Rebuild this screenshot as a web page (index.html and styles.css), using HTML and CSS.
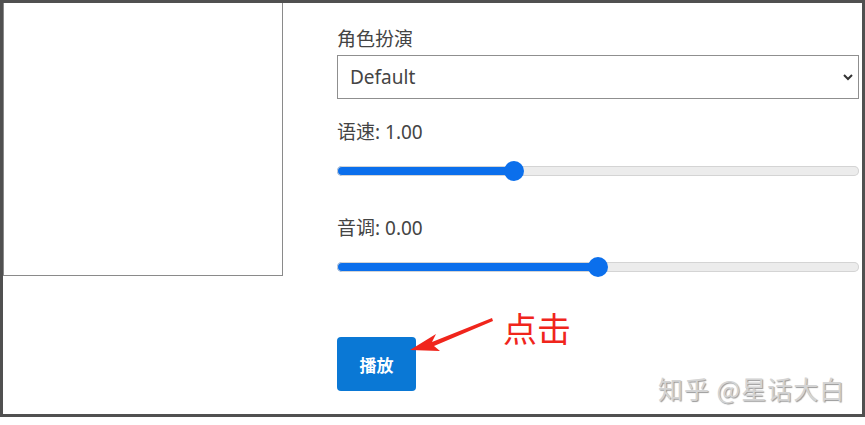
FILE: index.html
```html
<!DOCTYPE html>
<html lang="zh-CN">
  <head>
    <meta charset="UTF-8" />
    <title>语音合成</title>
    <link rel="stylesheet" href="styles.css">
  </head>
  <body>
    <div class="frame">
      <div class="canvas-box"></div>
      <div class="controls">
        <label class="label first">角色扮演</label>
        <div class="select-wrap">
          <select class="voice">
            <option>Default</option>
          </select>
          <svg class="chevron" width="12" height="8" viewBox="0 0 12 8">
            <path d="M2 2 L6 6 L10 2" fill="none" stroke="#333" stroke-width="2" />
          </svg>
        </div>
        <label class="label">语速: 1.00</label>
        <input class="slider" type="range" min="0.5" max="2" step="0.01" value="1" style="--fill: 33.5%" />
        <label class="label second">音调: 0.00</label>
        <input class="slider" type="range" min="-1" max="1" step="0.01" value="0" style="--fill: 50%" />
        <button class="play">播放</button>
      </div>
      <svg class="arrow" width="100" height="50" viewBox="0 0 100 50">
        <path d="M90 2 L30 26 L34 18 L8 34 L38 35 L32 30 L91 5 Z" fill="#f0251c" />
      </svg>
      <div class="note">点击</div>
      <div class="mark">知乎 @星话大白</div>
    </div>
  </body>
</html>
```

FILE: styles.css
```css
body {
  margin: 0;
  background: #fff;
  font-family: "Noto Sans", "Noto Sans CJK SC", sans-serif;
  color: #444;
}
.frame {
  position: relative;
  box-sizing: border-box;
  width: 865px;
  height: 417px;
  border: 3px solid #505050;
  display: flex;
  align-items: flex-start;
}
.canvas-box {
  box-sizing: border-box;
  width: 280px;
  height: 273px;
  border: 1px solid #8a8a8a;
  border-top: none;
}
.controls {
  margin-left: 54px;
  width: 522px;
  display: flex;
  flex-direction: column;
  align-items: flex-start;
}
.label {
  font-size: 19px;
  line-height: 30px;
  margin-top: 18px;
}
.label.first {
  margin-top: 21px;
}
.label.second {
  margin-top: 31px;
}
.select-wrap {
  position: relative;
  margin-top: 1px;
  width: 522px;
}
.voice {
  appearance: none;
  box-sizing: border-box;
  width: 100%;
  height: 44px;
  border: 1px solid #8f8f8f;
  border-radius: 0;
  background: #fff;
  padding: 0 12px;
  font-family: "Noto Sans", sans-serif;
  font-size: 19px;
  color: #444;
}
.chevron {
  position: absolute;
  right: 5px;
  top: 18px;
}
.slider {
  appearance: none;
  -webkit-appearance: none;
  width: 522px;
  height: 22px;
  margin: 13px 0 0;
  background: transparent;
}
.slider::-webkit-slider-runnable-track {
  height: 10px;
  border-radius: 5px;
  box-shadow: inset 0 0 0 1px #d4d4d4;
  background: linear-gradient(to right, #0b6fec var(--fill), #ececec var(--fill));
}
.slider::-webkit-slider-thumb {
  -webkit-appearance: none;
  width: 20px;
  height: 20px;
  margin-top: -5px;
  border-radius: 50%;
  background: #0b6fec;
}
.play {
  margin-top: 59px;
  width: 79px;
  height: 54px;
  border: none;
  border-radius: 4px;
  background: #0a78d5;
  color: #fff;
  font-family: "Noto Sans CJK SC", sans-serif;
  font-weight: bold;
  font-size: 17px;
}
.arrow {
  position: absolute;
  left: 399px;
  top: 313px;
}
.note {
  position: absolute;
  left: 500px;
  top: 300px;
  font-family: "Noto Sans CJK SC", sans-serif;
  font-size: 34px;
  color: #f0251c;
}
.mark {
  position: absolute;
  left: 655px;
  top: 367px;
  font-family: "Noto Sans CJK SC", sans-serif;
  font-size: 25px;
  letter-spacing: 1px;
  color: #d4d4d4;
  text-shadow: 1px 1px 1px #999;
}
```
